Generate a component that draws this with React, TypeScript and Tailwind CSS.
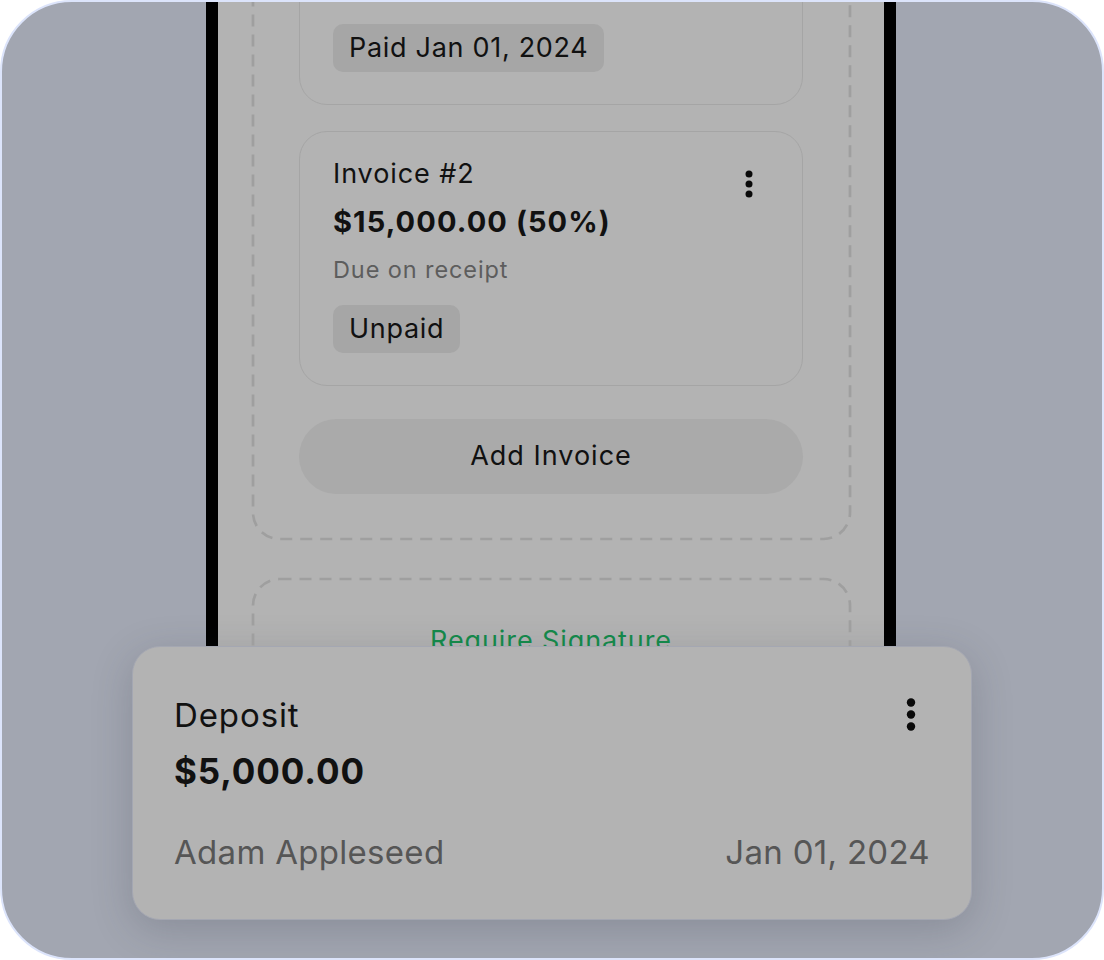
import type { ReactNode } from 'react';

const Dots = ({ size = 'md' }: { size?: 'md' | 'lg' }) =>
  size === 'lg' ? (
    <svg width="10" height="34" viewBox="0 0 10 34" className="shrink-0 fill-[#0a0a0a]">
      <circle cx="5" cy="4.5" r="4.2" />
      <circle cx="5" cy="16.5" r="4.2" />
      <circle cx="5" cy="28.5" r="4.2" />
    </svg>
  ) : (
    <svg width="8" height="28" viewBox="0 0 8 28" className="shrink-0 fill-[#0a0a0a]">
      <circle cx="4" cy="4" r="3.5" />
      <circle cx="4" cy="14" r="3.5" />
      <circle cx="4" cy="24" r="3.5" />
    </svg>
  );

// dashed outline drawn so the dash rhythm matches (12 on / 8 off)
const DashedBox = ({ className, children }: { className: string; children: ReactNode }) => (
  <div className={`relative rounded-[28px] ${className}`}>
    <svg className="pointer-events-none absolute top-[1.5px] left-[1.5px] h-[calc(100%-3px)] w-[calc(100%-3px)] overflow-visible">
      <rect
        width="100%"
        height="100%"
        rx="26.5"
        fill="none"
        stroke="#9f9f9f"
        strokeWidth="2.7"
        strokeDasharray="12 8"
      />
    </svg>
    {children}
  </div>
);

const InvoiceCard = ({
  title,
  amount,
  due,
  status,
}: {
  title: string;
  amount: string;
  due: string;
  status: string;
}) => (
  <div className="rounded-[28px] border border-[#a5a5a5] px-[33px] pt-[26px] pb-[32px]">
    <div className="flex items-start justify-between">
      <p className="text-[27px] leading-[32px] tracking-[0.9px] text-[#111]">{title}</p>
      <div className="mt-[12px] -mb-[12px] mr-[16px]">
        <Dots />
      </div>
    </div>
    <p className="mt-[12px] text-[29px] font-bold leading-[40px] tracking-[1.1px] text-[#111]">
      {amount}
    </p>
    <p className="mt-[13px] text-[23.5px] leading-[30px] tracking-[0.9px] text-[#5d5d5d]">{due}</p>
    <div className="mt-[20px] flex">
      <span className="flex h-[48px] items-center rounded-[10px] bg-[#a6a6a6] px-[16px] text-[27px] tracking-[0.7px] text-[#111]">
        {status}
      </span>
    </div>
  </div>
);

const App = () => {
  return (
    <div className="h-[960px] w-[1104px] bg-white font-['Inter',sans-serif]">
      <div className="h-[960px] w-[1104px] overflow-hidden rounded-[72px] border-2 border-[#dce4fb] bg-[#a2a6b1]">
        <div className="ml-[204px] h-[644px] w-[690px] overflow-hidden border-x-[12px] border-black bg-[#b3b3b3]">
          <DashedBox className="-mt-[200px] ml-[33px] w-[600px] px-[48px] pt-[48px] pb-[46px]">
            <div className="flex flex-col gap-[26px]">
              <InvoiceCard
                title="Invoice #1"
                amount="$15,000.00 (50%)"
                due="Due on receipt"
                status="Paid Jan 01, 2024"
              />
              <InvoiceCard
                title="Invoice #2"
                amount="$15,000.00 (50%)"
                due="Due on receipt"
                status="Unpaid"
              />
            </div>
            <button className="mt-[33px] flex h-[75px] w-full items-center justify-center rounded-full bg-[#aaaaaa] text-[27px] tracking-[1px] text-[#111]">
              Add Invoice
            </button>
          </DashedBox>
          <DashedBox className="mt-[37px] ml-[33px] h-[200px] w-[600px] pt-[48px] text-center">
            <p className="text-[27px] leading-[32px] tracking-[0.9px] text-[#14874a]">
              Require Signature
            </p>
          </DashedBox>
        </div>

        <div className="ml-[130px] w-[840px] rounded-[28px] border border-[#a4a7b2] bg-[#b3b3b3] px-[41px] pt-[48px] pb-[47px] shadow-[0_10px_40px_rgba(50,55,70,0.22)]">
          <div className="flex items-start justify-between">
            <p className="text-[33px] leading-[40px] tracking-[0.9px] text-[#111]">Deposit</p>
            <div className="mt-[3px] mr-[14px]">
              <Dots size="lg" />
            </div>
          </div>
          <p className="mt-[14px] text-[35px] font-bold leading-[44px] tracking-[0.9px] text-[#111]">
            $5,000.00
          </p>
          <div className="mt-[39px] flex items-center justify-between text-[33px] leading-[40px] tracking-[0.3px] text-[#565656]">
            <span>Adam Appleseed</span>
            <span>Jan 01, 2024</span>
          </div>
        </div>
      </div>
    </div>
  );
};

export default App;
